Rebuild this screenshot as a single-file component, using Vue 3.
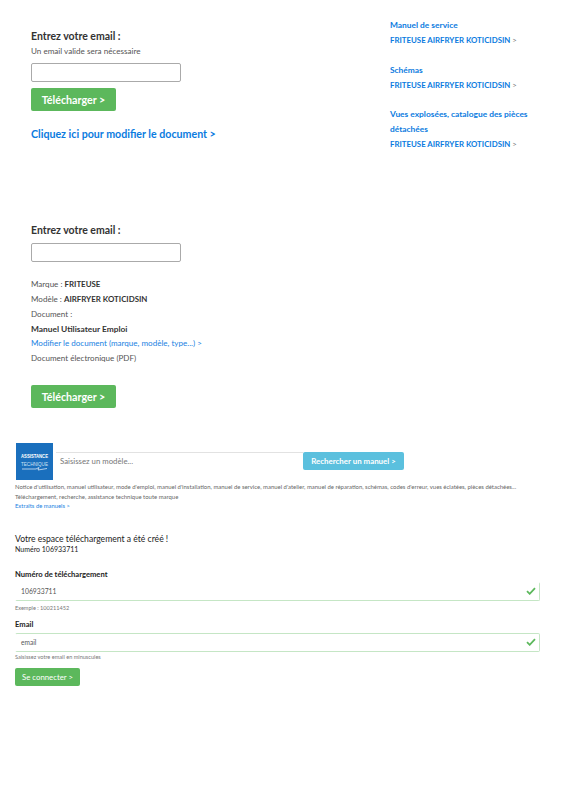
<script setup>
const details = [
  { label: 'Marque : ', value: 'FRITEUSE' },
  { label: 'Modèle : ', value: 'AIRFRYER KOTICIDSIN' },
]
const sideLinks = [
  'Manuel de service',
  'Schémas',
  'Vues explosées, catalogue des pièces détachées',
]
</script>

<template>
  <main class="page">
    <section class="top">
      <div class="left">
        <h2 class="title">Entrez votre email :</h2>
        <p class="hint">Un email valide sera nécessaire</p>
        <input class="mail" type="text" />
        <button class="dl">Télécharger &gt;</button>
        <a class="modify">Cliquez ici pour modifier le document &gt;</a>
      </div>
      <aside class="side">
        <div v-for="s in sideLinks" :key="s" class="side-group">
          <a class="side-link">{{ s }}</a>
          <a class="side-link upper">FRITEUSE AIRFRYER KOTICIDSIN <span>&gt;</span></a>
        </div>
      </aside>
    </section>

    <section class="second">
      <h2 class="title">Entrez votre email :</h2>
      <input class="mail second-mail" type="text" />
      <ul class="details">
        <li v-for="d in details" :key="d.label">{{ d.label }}<b>{{ d.value }}</b></li>
        <li>Document :</li>
        <li><b class="doc-name">Manuel Utilisateur Emploi</b></li>
        <li><a>Modifier le document (marque, modèle, type...) &gt;</a></li>
        <li>Document électronique (PDF)</li>
      </ul>
      <button class="dl second-dl">Télécharger &gt;</button>
    </section>

    <section class="search">
      <div class="search-row">
        <div class="logo">
          <svg width="37" height="37" viewBox="0 0 37 37">
            <rect width="37" height="37" fill="#1a6fbd" />
            <text x="5" y="14.5" textLength="27" lengthAdjust="spacingAndGlyphs" class="logo-a">ASSISTANCE</text>
            <text x="5" y="22.5" textLength="27" lengthAdjust="spacingAndGlyphs" class="logo-b">TECHNIQUE</text>
            <path d="M6 26h14l3-1.5-1 2.5 9-1.5" fill="none" stroke="#dbe9f6" stroke-width="0.8" />
          </svg>
        </div>
        <div class="search-field">Saisissez un modèle...</div>
        <button class="search-btn">Rechercher un manuel &gt;</button>
      </div>
      <p class="desc">Notice d'utilisation, manuel utilisateur, mode d'emploi, manuel d'installation, manuel de service, manuel d'atelier, manuel de réparation, schémas, codes d'erreur, vues éclatées, pièces détachées...<br />Téléchargement, recherche, assistance technique toute marque</p>
      <a class="extracts">Extraits de manuels &gt;</a>
    </section>

    <section class="space">
      <h3 class="space-title">Votre espace téléchargement a été créé !</h3>
      <p class="space-num">Numéro 106933711</p>
      <label class="lbl first-lbl">Numéro de téléchargement</label>
      <div class="field">
        <span>106933711</span>
        <svg class="check" width="10" height="8" viewBox="0 0 10 8"><path d="M1 4.2 3.7 6.8 9 1.2" fill="none" stroke="#5cb85c" stroke-width="1.8" /></svg>
      </div>
      <small class="help">Exemple : 100211452</small>
      <label class="lbl">Email</label>
      <div class="field field-mail">
        <span>email</span>
        <svg class="check" width="10" height="8" viewBox="0 0 10 8"><path d="M1 4.2 3.7 6.8 9 1.2" fill="none" stroke="#5cb85c" stroke-width="1.8" /></svg>
      </div>
      <small class="help help-mail">Saisissez votre email en minuscules</small>
      <button class="connect">Se connecter &gt;</button>
    </section>
  </main>
</template>

<style>
html, body { margin: 0; background: #fff; }
</style>

<style scoped>
.page {
  box-sizing: border-box;
  width: 565px;
  height: 800px;
  overflow: hidden;
  font-family: Lato, "Open Sans", sans-serif;
  color: #333;
}
.top {
  display: flex;
  height: 223px;
  padding-top: 18px;
  box-sizing: border-box;
}
.left {
  width: 359px;
  padding: 11px 0 0 31px;
  box-sizing: border-box;
  display: flex;
  flex-direction: column;
  align-items: flex-start;
}
.title {
  margin: 0;
  font-size: 10.5px;
  line-height: 14px;
  font-weight: 700;
  color: #333;
}
.hint {
  margin: 1px 0 0;
  font-size: 8.1px;
  line-height: 15px;
  color: #555;
}
.mail {
  box-sizing: border-box;
  display: block;
  width: 150px;
  height: 19px;
  margin: 4px 0 0;
  padding: 0;
  background: #fff;
  border: 1px solid #aaa;
  border-radius: 2px;
}
.dl {
  display: block;
  box-sizing: border-box;
  width: 85px;
  height: 23px;
  margin: 6px 0 0;
  padding: 0;
  border: 0;
  border-radius: 2px;
  background: #5cb85c;
  color: #fff;
  font: 700 10.7px/23px Lato, sans-serif;
}
.modify {
  margin-top: 16px;
  font-size: 10.65px;
  line-height: 14px;
  font-weight: 700;
  color: #0a7be0;
}
.side {
  width: 140px;
  margin-left: 31px;
}
.side-group {
  margin-bottom: 14.5px;
}
.side-link {
  display: block;
  font-size: 8.4px;
  line-height: 15px;
  font-weight: 700;
  color: #0a7be0;
}
.upper {
  font-size: 7.85px;
}
.upper span {
  font-weight: 400;
  color: #777;
}
.second {
  padding-left: 31px;
}
.second-mail {
  margin-top: 6px;
}
.details {
  list-style: none;
  margin: 15px 0 0;
  padding: 0;
  font-size: 8.05px;
  line-height: 14.85px;
  color: #555;
}
.details b {
  color: #333;
  font-size: 7.9px;
}
.details .doc-name {
  font-size: 8.4px;
}
.details a {
  color: #1a82e2;
}
.second-dl {
  margin-top: 19px;
}
.search {
  margin-top: 35px;
  padding-left: 15px;
}
.search-row {
  display: flex;
  align-items: flex-start;
  padding-left: 1px;
}
.logo {
  width: 37px;
  height: 37px;
}
.logo svg {
  display: block;
}
.logo-a {
  font: 700 4.6px "Liberation Sans", sans-serif;
  fill: #fff;
}
.logo-b {
  font: 400 5.6px "Liberation Sans", sans-serif;
  fill: #cfe2f4;
}
.search-field {
  box-sizing: border-box;
  width: 247px;
  height: 18px;
  margin: 9px 0 0 3px;
  padding-left: 4px;
  border-top: 1px solid #e2e2e2;
  font-size: 7.8px;
  line-height: 17px;
  color: #777;
}
.search-btn {
  box-sizing: border-box;
  width: 101px;
  height: 18px;
  margin-top: 9px;
  padding: 0;
  border: 0;
  border-radius: 2px;
  background: #5bc0de;
  color: #fff;
  font: 700 7.9px/18px Lato, sans-serif;
}
.desc {
  margin: 2px 0 0;
  font-size: 5.95px;
  line-height: 9.6px;
  color: #666;
  white-space: nowrap;
}
.extracts {
  display: block;
  font-size: 5.85px;
  line-height: 9.6px;
  color: #1a82e2;
}
.space {
  margin-top: 22px;
  padding-left: 15px;
}
.space-title {
  margin: 0;
  font-size: 8.6px;
  line-height: 12px;
  font-weight: 400;
  color: #222;
}
.space-num {
  margin: 0;
  font-size: 7px;
  line-height: 9px;
  color: #222;
}
.lbl {
  display: block;
  margin-top: 5px;
  font-size: 7.6px;
  line-height: 12px;
  font-weight: 700;
  color: #222;
}
.first-lbl {
  margin-top: 14px;
}
.field {
  position: relative;
  box-sizing: border-box;
  width: 525px;
  height: 19px;
  margin-top: 2px;
  padding-left: 5px;
  border: 1px solid #c5e6c5;
  border-top-color: #fff;
  border-left-color: #fff;
  border-radius: 2px;
  font-size: 6.8px;
  line-height: 17px;
  color: #555;
}
.field-mail {
  border-top-color: #c5e6c5;
  border-left-color: #fff;
  margin-top: 3px;
  font-size: 6.6px;
}
.check {
  position: absolute;
  right: 3px;
  top: 4px;
}
.help {
  display: block;
  margin-top: 1px;
  font-size: 5.6px;
  line-height: 11px;
  color: #777;
}
.help-mail {
  margin-top: -1px;
}
.connect {
  display: block;
  box-sizing: border-box;
  width: 65px;
  height: 18px;
  margin-top: 6px;
  padding: 0;
  border: 0;
  border-radius: 2px;
  background: #5cb85c;
  color: #fff;
  font: 400 7.8px/18px Lato, sans-serif;
}
</style>
